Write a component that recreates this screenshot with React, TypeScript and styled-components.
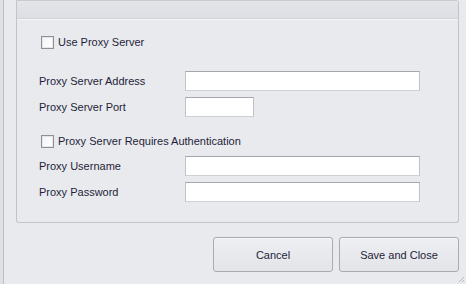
import React from 'react';
import styled, { createGlobalStyle } from 'styled-components';

const GlobalStyle = createGlobalStyle`
  html, body {
    margin: 0;
    padding: 0;
    background: #e9eaee;
  }
  body {
    font-family: "Liberation Sans", Arial, sans-serif;
    font-size: 11px;
    color: #1e1e3a;
  }
`;

const Window = styled.div`
  display: flex;
  width: 466px;
  height: 284px;
  background: #e9eaee;
  overflow: hidden;
  position: relative;
`;

const LeftEdge = styled.div`
  width: 3px;
  flex: none;
  background: #dfe0e5;
  border-right: 1px solid #bcbdc5;
`;

const Main = styled.div`
  flex: 1;
  display: flex;
  flex-direction: column;
  padding: 0 7px 0 12px;
`;

const Group = styled.div`
  height: 223px;
  box-sizing: border-box;
  border: 1px solid #c3c4cb;
  border-top-color: #c9cad0;
  border-radius: 0 3px 3px 3px;
  display: flex;
  flex-direction: column;
`;

const GroupHeader = styled.div`
  height: 17px;
  background: linear-gradient(#e4e5e9, #dddee3);
  border-bottom: 1px solid #d3d4da;
  box-shadow: 0 1px 0 #f3f4f6;
`;

const GroupBody = styled.div`
  padding: 16px 0 0 22px;
  display: flex;
  flex-direction: column;
`;

const CheckRow = styled.label<{ $top?: number }>`
  display: flex;
  align-items: center;
  gap: 4px;
  height: 14px;
  margin-left: 2px;
  margin-top: ${p => p.$top ?? 0}px;
`;

const Box = styled.span`
  width: 11px;
  height: 11px;
  border: 1px solid #8e8f97;
  background: linear-gradient(135deg, #f4f4f6, #ffffff);
  box-shadow: inset 0 0 0 1px #e6e6ea;
`;

const FieldGrid = styled.div<{ $top: number }>`
  display: grid;
  grid-template-columns: 146px auto;
  row-gap: 6px;
  align-items: center;
  margin-top: ${p => p.$top}px;
`;

const Label = styled.span`
  line-height: 20px;
`;

const TextBox = styled.div<{ $w: number }>`
  width: ${p => p.$w}px;
  height: 20px;
  box-sizing: border-box;
  background: #ffffff;
  border: 1px solid #d0d1d7;
  border-top-color: #a4a5ad;
  border-left-color: #c0c1c8;
  border-right-color: #c0c1c8;
`;

const Footer = styled.div`
  display: flex;
  justify-content: flex-end;
  gap: 6px;
  margin-top: 14px;
`;

const Button = styled.button`
  width: 120px;
  height: 35px;
  box-sizing: border-box;
  font-family: "Liberation Sans", Arial, sans-serif;
  font-size: 11px;
  color: #1e1e3a;
  background: linear-gradient(#eeeff2, #e3e4e8);
  border: 1px solid #a9aab2;
  border-radius: 3px;
  box-shadow: inset 0 1px 0 #f7f7f9;
  padding: 0;
`;

const Grip = styled.svg`
  position: absolute;
  right: 1px;
  bottom: 1px;
`;

const fields = [
  { label: 'Proxy Server Address', width: 235 },
  { label: 'Proxy Server Port', width: 69 },
];

const authFields = [
  { label: 'Proxy Username', width: 235 },
  { label: 'Proxy Password', width: 235 },
];

export default function App() {
  return (
    <>
      <GlobalStyle />
      <Window>
        <LeftEdge />
        <Main>
          <Group>
            <GroupHeader />
            <GroupBody>
              <CheckRow>
                <Box />
                <span>Use Proxy Server</span>
              </CheckRow>
              <FieldGrid $top={22}>
                {fields.map(f => (
                  <React.Fragment key={f.label}>
                    <Label>{f.label}</Label>
                    <TextBox $w={f.width} />
                  </React.Fragment>
                ))}
              </FieldGrid>
              <CheckRow $top={17}>
                <Box />
                <span>Proxy Server Requires Authentication</span>
              </CheckRow>
              <FieldGrid $top={8}>
                {authFields.map(f => (
                  <React.Fragment key={f.label}>
                    <Label>{f.label}</Label>
                    <TextBox $w={f.width} />
                  </React.Fragment>
                ))}
              </FieldGrid>
            </GroupBody>
          </Group>
          <Footer>
            <Button>Cancel</Button>
            <Button>Save and Close</Button>
          </Footer>
        </Main>
        <Grip width="8" height="8" viewBox="0 0 8 8">
          <path d="M7 2 L2 7 M7 5 L5 7" stroke="#b8b9c0" strokeWidth="1" />
        </Grip>
      </Window>
    </>
  );
}
